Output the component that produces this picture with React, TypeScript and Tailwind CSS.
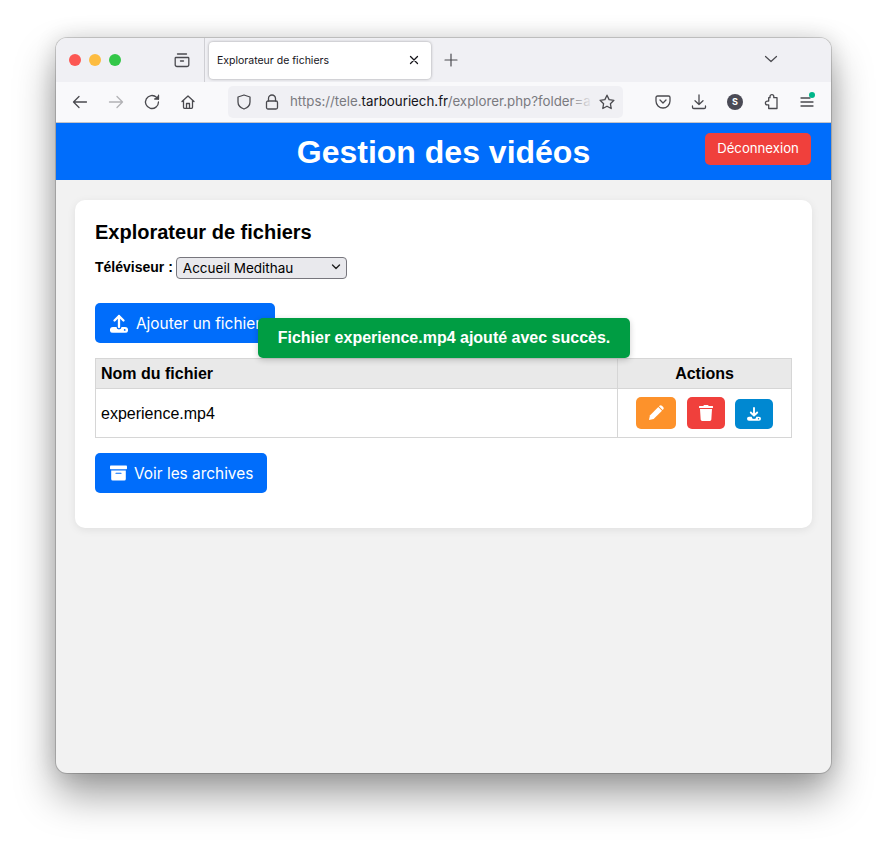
import { FaTrash } from "react-icons/fa";

const stroke = "#4a4a4f";

function Ico({ children, size = 18, className = "" }: { children: React.ReactNode; size?: number; className?: string }) {
  return (
    <svg width={size} height={size} viewBox="0 0 18 18" fill="none" stroke={stroke} strokeWidth="1.3" strokeLinecap="round" strokeLinejoin="round" className={className}>
      {children}
    </svg>
  );
}

function UploadIcon() {
  return (
    <svg width="18" height="19" viewBox="0 0 18 19" className="shrink-0">
      <path d="M9 13V2M4.500 6.500 9 2l4.500 4.500" fill="none" stroke="white" strokeWidth="2.300" strokeLinecap="round" strokeLinejoin="round" />
      <path d="M2.800 13H6.500a2.500 2.500 0 0 0 5 0h3.700a2.800 2.800 0 0 1 0 5.800H2.800a2.800 2.800 0 0 1 0-5.800Z" fill="white" />
      <circle cx="14.700" cy="15.900" r="0.900" fill="#006dfb" />
    </svg>
  );
}

function DownloadIcon() {
  return (
    <svg width="14" height="14" viewBox="0 0 14 14">
      <path d="M7 1v7M3.800 5.500 7 8.700l3.200-3.200" fill="none" stroke="white" strokeWidth="1.900" strokeLinecap="round" strokeLinejoin="round" />
      <path d="M2 9.700h2.700a2.300 2.300 0 0 0 4.600 0H12a2 2 0 0 1 0 4H2a2 2 0 0 1 0-4Z" fill="white" />
      <circle cx="11.500" cy="11.700" r="0.700" fill="#0088d1" />
    </svg>
  );
}

function ArchiveIcon() {
  return (
    <svg width="17" height="16" viewBox="0 0 17 16" className="shrink-0">
      <rect x="0" y="0.500" width="17" height="3.800" rx="0.800" fill="white" />
      <path d="M1.200 5.500h14.600V14a1.500 1.500 0 0 1-1.500 1.500H2.700A1.500 1.500 0 0 1 1.200 14Z" fill="white" />
      <path d="M6 8.200h5" stroke="#006dfb" strokeWidth="1.100" strokeLinecap="round" />
    </svg>
  );
}

function PencilIcon() {
  return (
    <svg width="17" height="17" viewBox="0 0 17 17">
      <path d="M1 16l.9-4.600L10.300 3l3.700 3.700-8.400 8.400Z" fill="white" />
      <path d="M11.500 1.800a1.700 1.700 0 0 1 2.400 0l1.300 1.300a1.700 1.700 0 0 1 0 2.400l-.6.500-3.700-3.700Z" fill="white" />
    </svg>
  );
}

export default function App() {
  return (
    <div className="min-h-[847px] w-[887px] bg-white pt-[38px] pl-[56px] font-['Inter',sans-serif]">
      <div className="relative flex h-[735px] w-[775px] flex-col overflow-hidden rounded-[11px] bg-[#f2f2f2] shadow-[0_0_0_1px_rgba(0,0,0,0.16),0_22px_40px_rgba(0,0,0,0.38),0_0_22px_rgba(0,0,0,0.14)]">
        {/* tab strip */}
        <div className="flex h-[44px] shrink-0 items-center bg-[#f0f0f4]">
          <div className="ml-[13px] flex gap-[8px]">
            <span className="h-[12px] w-[12px] rounded-full bg-[#fc5753]" />
            <span className="h-[12px] w-[12px] rounded-full bg-[#fdbc40]" />
            <span className="h-[12px] w-[12px] rounded-full bg-[#33c748]" />
          </div>
          <Ico className="ml-[52px]">
            <path d="M3 6.500h12a.8.8 0 0 1 .8.8v6.400a1.800 1.800 0 0 1-1.800 1.800H4a1.800 1.800 0 0 1-1.800-1.800V7.300a.8.8 0 0 1 .8-.8Z" />
            <path d="M4.500 3h9" />
            <path d="M7.500 10h3" />
          </Ico>
          <div className="ml-[13px] h-[44px] w-px bg-[#cfcfd4]" />
          <div className="ml-[4px] flex h-[37px] w-[222px] items-center justify-between rounded-[4px] bg-white pl-[8px] pr-[12px] shadow-[0_0_3px_rgba(0,0,0,0.35)]">
            <span className="pt-[2px] text-[10.5px] text-[#15141a]">Explorateur de fichiers</span>
            <svg width="10" height="10" viewBox="0 0 10 10" stroke="#15141a" strokeWidth="1.300" strokeLinecap="round"><path d="M1.500 1.500l7 7M8.500 1.500l-7 7" /></svg>
          </div>
          <svg width="14" height="14" viewBox="0 0 14 14" stroke={stroke} strokeWidth="1.200" strokeLinecap="round" className="ml-[13px]"><path d="M7 1v12M1 7h12" /></svg>
          <div className="flex-1" />
          <svg width="14" height="8" viewBox="0 0 14 8" fill="none" stroke={stroke} strokeWidth="1.200" strokeLinecap="round" strokeLinejoin="round" className="mr-[53px] mb-[3px]"><path d="M1.500 1.500 7 6.500l5.500-5" /></svg>
        </div>
        {/* nav bar */}
        <div className="flex h-[41px] shrink-0 items-center border-b border-[#c4c4c8] bg-[#f9f9fb]">
          <Ico className="ml-[15px]"><path d="M15.500 9h-13M8 3.500 2.500 9 8 14.500" /></Ico>
          <Ico className="ml-[18px] opacity-40"><path d="M2.500 9h13M10 3.500 15.500 9 10 14.500" /></Ico>
          <Ico className="ml-[18px]"><path d="M15.500 9a6.500 6.500 0 1 1-2-4.700L15.500 6" /><path d="M15.500 2.200V6h-3.800" fill={stroke} /></Ico>
          <Ico className="ml-[18px]"><path d="M3 8.500 9 3l6 5.500M4.500 7.500v6.800a1 1 0 0 0 1 1h7a1 1 0 0 0 1-1V7.500M7.500 15.200v-4.700h3v4.700" /></Ico>
          <div className="ml-[31px] flex h-[32px] w-[395px] items-center rounded-[5px] bg-[#f0f0f4] pl-[7px] pr-[7px]">
            <Ico><path d="M9 2 3 4v5c0 3.500 2.500 5.800 6 7 3.500-1.200 6-3.500 6-7V4Z" /></Ico>
            <Ico className="ml-[10px]"><rect x="3.500" y="8" width="11" height="8" rx="1.500" /><path d="M5.500 8V5.500a3.500 3.500 0 0 1 7 0V8" /></Ico>
            <div className="relative ml-[9px] w-[303px] text-[13.3px] whitespace-nowrap text-[#7a7a7f]">
              https://tele.<span className="text-[#15141a]">tarbouriech.fr</span>/explorer.php?folder=a
              <div className="absolute top-0 right-0 bottom-0 w-[24px] bg-gradient-to-r from-transparent to-[#f0f0f4]" />
            </div>
            <Ico className="ml-[5px]"><path d="m9 2.200 2.100 4.400 4.800.7-3.500 3.400.8 4.800L9 13.200l-4.200 2.300.8-4.800-3.500-3.400 4.800-.7Z" /></Ico>
          </div>
          <Ico className="ml-[31px]"><path d="M3.500 3h11A1.500 1.500 0 0 1 16 4.500V8a7 7 0 0 1-14 0V4.500A1.500 1.500 0 0 1 3.500 3Z" /><path d="m6 7 3 3 3-3" /></Ico>
          <Ico className="ml-[18px]"><path d="M9 2v9.500M5 7.800 9 11.500l4-3.700M2.500 13v1.200a1.300 1.300 0 0 0 1.300 1.300h10.400a1.300 1.300 0 0 0 1.300-1.300V13" /></Ico>
          <div className="ml-[19px] flex h-[16px] w-[16px] items-center justify-center rounded-full bg-[#4a4a55] text-[9px] font-bold text-white">S</div>
          <Ico className="ml-[19px]"><path d="M8 4.700V3.600a1.900 1.900 0 0 1 3.800 0v1.100h3.200v10.800H6.700v-3.600H5.300a1.900 1.900 0 0 1 0-3.800h1.400V4.700Z" /></Ico>
          <div className="relative ml-[18px]">
            <Ico><path d="M3 5h9M3 9h12M3 13h12" /></Ico>
            <span className="absolute top-[-1px] right-[1px] h-[6px] w-[6px] rounded-full bg-[#00b589]" />
          </div>
        </div>
        {/* page */}
        <div className="relative flex-1 font-['Liberation_Sans',sans-serif] text-black">
          <header className="relative flex h-[57px] items-center justify-center bg-[#006dfb]">
            <h1 className="text-[32px] font-bold text-white">Gestion des vidéos</h1>
            <button className="absolute top-[10px] right-[20px] h-[32px] w-[106px] rounded-[5px] bg-[#f0403c] font-['Inter',sans-serif] text-[13.2px] text-white">Déconnexion</button>
          </header>
          <main className="mx-[19px] mt-[20px] h-[328px] rounded-[10px] bg-white px-[20px] pt-[20px] shadow-[0_2px_8px_rgba(0,0,0,0.08)]">
            <h2 className="text-[20px] leading-[24px] font-bold">Explorateur de fichiers</h2>
            <div className="mt-[12px] flex items-center">
              <span className="text-[14px] font-bold">Téléviseur :</span>
              <div className="relative ml-[3px] h-[22px] w-[171px]">
                <select className="h-full w-full appearance-none rounded-[4px] border border-[#77767d] bg-[#e9e9ed] pl-[6px] font-['Inter',sans-serif] text-[13.5px]">
                  <option>Accueil Medithau</option>
                </select>
                <svg width="10" height="6" viewBox="0 0 10 6" fill="none" stroke="#222" strokeWidth="1.400" strokeLinecap="round" strokeLinejoin="round" className="pointer-events-none absolute top-[8px] right-[6px]"><path d="M1.500 1 5 4.500 8.500 1" /></svg>
              </div>
            </div>
            <button className="mt-[25px] flex h-[40px] w-[180px] items-center gap-[8px] rounded-[5px] bg-[#006dfb] pl-[15px] font-['Inter',sans-serif] text-[15.4px] text-white">
              <UploadIcon /><span className="pt-[2px]">Ajouter un fichier</span>
            </button>
            <table className="mt-[15px] w-[697px] table-fixed border-collapse text-[16px]">
              <colgroup><col className="w-[522px]" /><col /></colgroup>
              <thead>
                <tr className="h-[30px] bg-[#e9e9e9]">
                  <th className="border border-[#d6d6d6] pl-[5px] text-left font-bold">Nom du fichier</th>
                  <th className="border border-[#d6d6d6] text-center font-bold">Actions</th>
                </tr>
              </thead>
              <tbody>
                <tr className="h-[49px]">
                  <td className="border border-[#d6d6d6] pt-[2px] pl-[5px] text-[16px]">experience.mp4</td>
                  <td className="border border-[#d6d6d6]">
                    <div className="flex items-end justify-center pb-[1px]">
                      <button className="flex h-[32px] w-[40px] items-center justify-center rounded-[5px] bg-[#fd922b]"><PencilIcon /></button>
                      <button className="ml-[11px] flex h-[32px] w-[38px] items-center justify-center rounded-[5px] bg-[#f0403c] text-white"><FaTrash size={16} /></button>
                      <button className="ml-[10px] flex h-[30px] w-[38px] items-center justify-center rounded-[5px] bg-[#0088d1]"><DownloadIcon /></button>
                    </div>
                  </td>
                </tr>
              </tbody>
            </table>
            <button className="mt-[15px] flex h-[40px] w-[172px] items-center gap-[7px] rounded-[5px] bg-[#006dfb] pl-[15px] font-['Inter',sans-serif] text-[15.4px] text-white">
              <ArchiveIcon /><span className="pt-[2px]">Voir les archives</span>
            </button>
          </main>
          <div className="absolute top-[195px] left-[202px] flex h-[40px] w-[372px] items-center justify-center rounded-[5px] bg-[#009d43] text-[16px] font-bold text-white shadow-[0_2px_6px_rgba(0,0,0,0.2)]">
            Fichier experience.mp4 ajouté avec succès.
          </div>
        </div>
      </div>
    </div>
  );
}
